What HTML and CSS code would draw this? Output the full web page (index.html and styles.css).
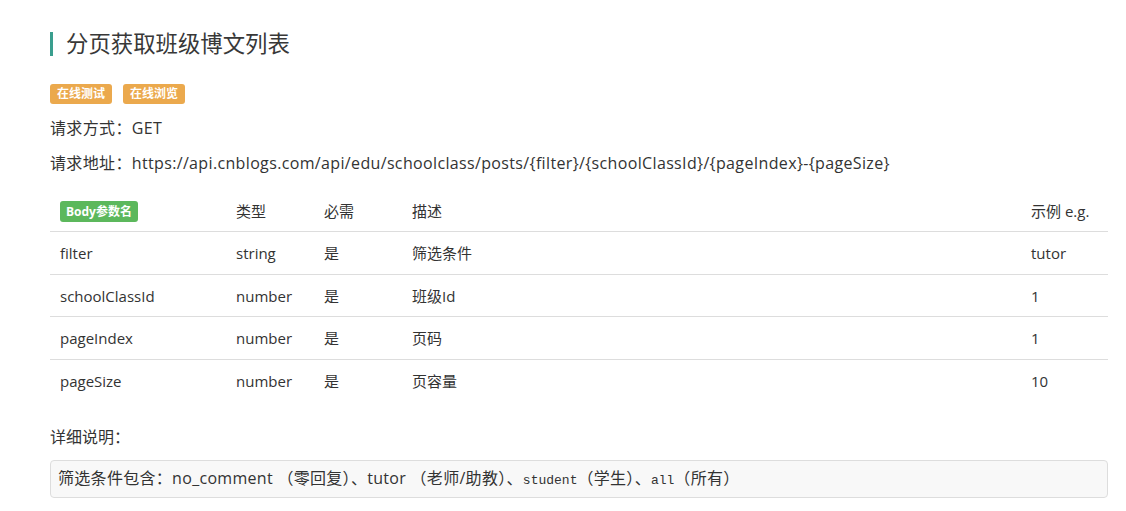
FILE: index.html
```html
<!DOCTYPE html>
<html lang="zh">
<head>
<meta charset="utf-8">
<link rel="stylesheet" href="styles.css">
</head>
<body>
<div class="page">
  <h2 class="title">分页获取班级博文列表</h2>
  <div class="actions">
    <span class="tag tag-orange">在线测试</span>
    <span class="tag tag-orange">在线浏览</span>
  </div>
  <p class="line">请求方式：GET</p>
  <p class="line">请求地址：https://api.cnblogs.com/api/edu/schoolclass/posts/{filter}/{schoolClassId}/{pageIndex}-{pageSize}</p>
  <table class="params">
    <thead>
      <tr>
        <th class="c1"><span class="tag tag-green">Body参数名</span></th>
        <th class="c2">类型</th>
        <th class="c3">必需</th>
        <th class="c4">描述</th>
        <th class="c5">示例 e.g.</th>
      </tr>
    </thead>
    <tbody>
      <tr><td>filter</td><td>string</td><td>是</td><td>筛选条件</td><td>tutor</td></tr>
      <tr><td>schoolClassId</td><td>number</td><td>是</td><td>班级Id</td><td>1</td></tr>
      <tr><td>pageIndex</td><td>number</td><td>是</td><td>页码</td><td>1</td></tr>
      <tr><td>pageSize</td><td>number</td><td>是</td><td>页容量</td><td>10</td></tr>
    </tbody>
  </table>
  <p class="detail-label">详细说明：</p>
  <div class="detail">筛选条件包含：no_comment （零回复）、tutor （老师/助教）、<code>student</code>（学生）、<code>all</code>（所有）</div>
</div>
</body>
</html>
```

FILE: styles.css
```css
html, body {
  margin: 0;
  padding: 0;
  background: #fff;
}
body {
  font-family: "Open Sans", "Noto Sans CJK SC", sans-serif;
  font-size: 16px;
  color: #333;
}
.page {
  padding: 30px 18px 0 50px;
}
.title {
  margin: 0;
  font-weight: normal;
  font-size: 22.4px;
  line-height: 24px;
  color: #383838;
  border-left: 3px solid #3a9e8e;
  padding-left: 13px;
  margin-top: 2px;
}
.actions {
  display: flex;
  gap: 11px;
  margin-top: 28px;
}
.tag {
  display: inline-block;
  color: #fff;
  font-weight: bold;
  font-size: 12px;
  line-height: 20px;
  padding: 0 7px;
  border-radius: 3px;
}
.tag-orange {
  background: #eba94d;
}
.tag-green {
  background: #5cb85c;
  padding: 0 6px;
  line-height: 21px;
}
.line {
  margin: 0;
  line-height: 22px;
  letter-spacing: 0.35px;
}
.actions + .line {
  margin-top: 13px;
}
.line + .line {
  margin-top: 13px;
}
.params {
  width: 100%;
  border-collapse: collapse;
  margin-top: 15px;
  font-size: 15px;
}
.params th {
  font-weight: normal;
  text-align: left;
  padding: 10px 10px 9px;
  line-height: 22px;
  border-bottom: 1px solid #ddd;
  white-space: nowrap;
}
.params td {
  padding: 10px 10px 9.5px;
  line-height: 22px;
  border-top: 1px solid #ddd;
}
.params tbody tr:first-child td {
  border-top: 0;
}
.params .c1 { width: 156px; }
.params .c2 { width: 68px; }
.params .c3 { width: 68px; }
.params .c5 { width: 67px; }
.detail-label {
  margin: 25px 0 0;
  line-height: 22px;
}
.detail {
  margin-top: 12px;
  border: 1px solid #ddd;
  border-radius: 4px;
  background: #f8f8f8;
  padding: 6px 7px 5px;
  line-height: 22px;
  letter-spacing: 0.3px;
}
code {
  font-family: "Liberation Mono", "DejaVu Sans Mono", monospace;
  font-size: 13px;
  letter-spacing: 0;
  color: #333;
}
```
